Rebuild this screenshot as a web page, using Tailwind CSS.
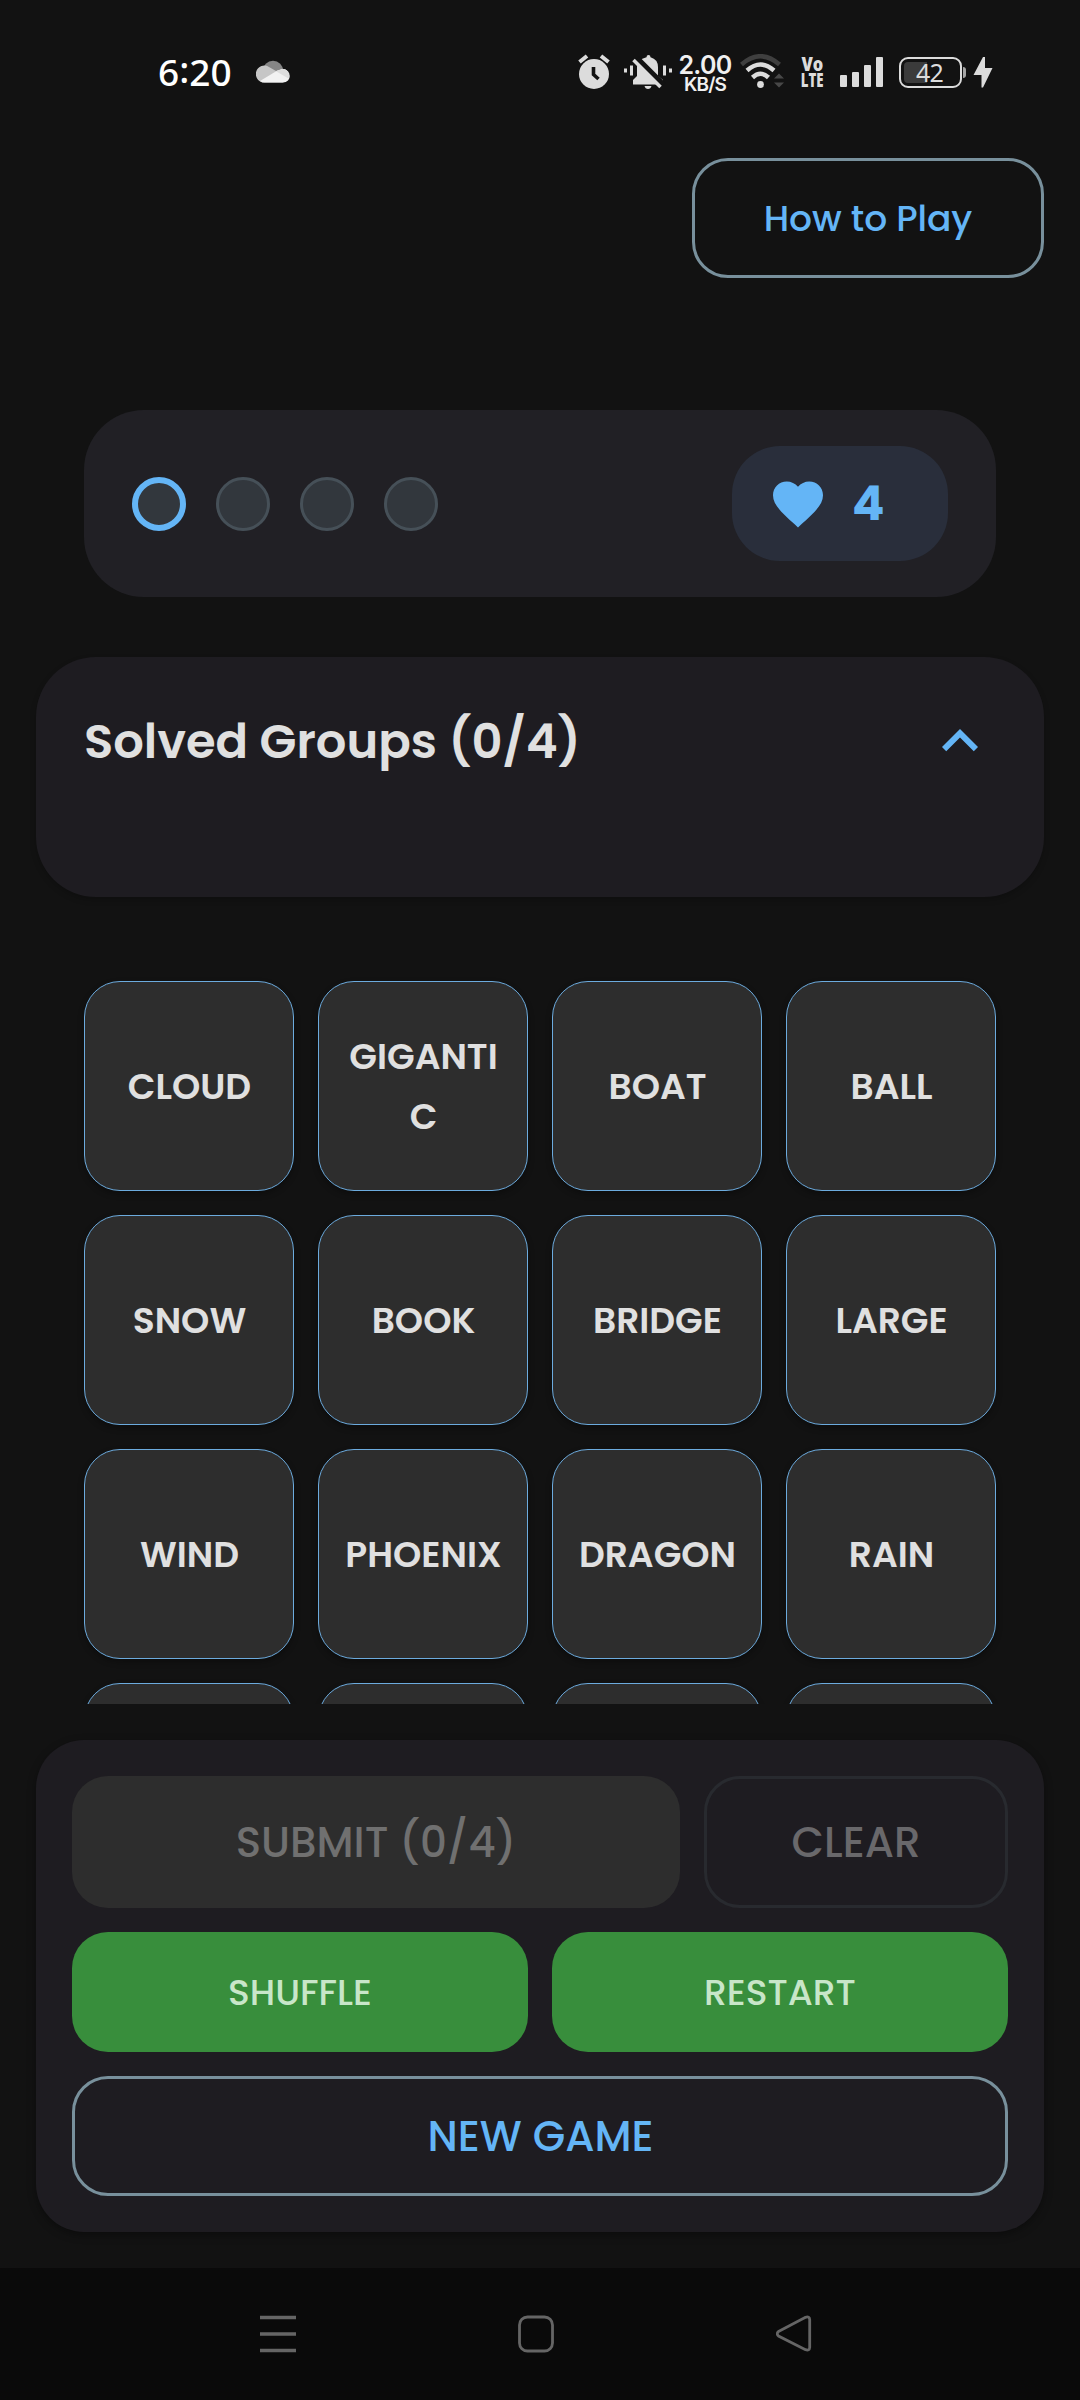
<!DOCTYPE html>
<html lang="en">
<head>
<meta charset="utf-8">
<title>Word Groups</title>
<script src="https://cdn.jsdelivr.net/npm/@tailwindcss/browser@4"></script>
</head>
<body class="bg-[#121212]">
<div class="w-[1080px] h-[2400px] flex flex-col overflow-hidden bg-[#121212] font-['Poppins','Inter',sans-serif] font-medium">

  <!-- Status bar -->
  <header class="h-[158px] shrink-0 flex items-start pt-[48px] pl-[158px] text-[#dcdcdc]">
    <div class="h-12 w-[98px] flex items-center font-['Noto_Sans',sans-serif] text-[37px] leading-[48px] text-white whitespace-nowrap">6<span class="-mt-1.5">:</span>20</div>
    <svg class="mt-[12px]" width="35" height="24" viewBox="0 0 35 24">
      <circle cx="17" cy="11" r="10.2" fill="#858585"/>
      <path d="M8.500 22.500a8.500 8.500 0 1 1 4.500-15.600L20 11l8-1.500a7 7 0 0 1-1.500 13z" fill="#c6c6c6"/>
      <path d="M4 21l17-10.300 6-1.700a7 7 0 0 1 5 11.500q-2 2-5 2H8.500q-2.500 0-4.500-1.500z" fill="#f2f2f2"/>
      <path d="M20 11.300l6-2.600a7 7 0 0 1 6.500 9.800z" fill="#dedede"/>
    </svg>
    <svg class="ml-[287px] mt-[6px]" width="32" height="36" viewBox="0 0 32 36">
      <circle cx="16" cy="20" r="15" fill="currentColor"/>
      <path d="M1.500 8L9 2M30.500 8L23 2" stroke="currentColor" stroke-width="4" fill="none"/>
      <path d="M15.500 13v7.500l5 4.500" stroke="#121212" stroke-width="3.600" fill="none"/>
    </svg>
    <svg class="ml-[14px] mt-[6px]" width="48" height="36" viewBox="0 0 48 36">
      <path d="M0 14.500h3v4H0zM6 11.500h3v10H6zM39 11.500h3v10h-3zM45 14.500h3v4h-3z" fill="currentColor"/>
      <path d="M24.500 1q2 0 2 2.300 7.500 2 7.500 10V22l5 4v4.500H9V26l4-4v-9q0-7.500 9.500-9.700Q22.500 1 24.500 1z" fill="currentColor"/>
      <path d="M20.500 32h7q-.8 3-3.500 3t-3.500-3z" fill="currentColor"/>
      <path d="M13 4.500L39.500 31" stroke="#121212" stroke-width="6"/>
      <path d="M9.500 6L36.500 33" stroke="currentColor" stroke-width="3.500"/>
    </svg>
    <div class="ml-[6px] mt-[6px] w-[54px] flex flex-col items-center font-['Inter',sans-serif] text-[#f0f0f0]">
      <span class="text-[25px] leading-[22px] font-semibold tracking-[-0.7px]">2.00</span>
      <span class="text-[19px] leading-[18px] font-semibold tracking-[-0.8px]">KB/S</span>
    </div>
    <svg class="ml-[8px] mt-[6px]" width="44" height="36" viewBox="0 0 44 36" fill="none">
      <path d="M1.500 10.500Q20.500-6 39.500 10.500" stroke="#3f3f3f" stroke-width="4.500"/>
      <path d="M7 16.500Q20.500 4.500 34 16.500" stroke="currentColor" stroke-width="4.500"/>
      <path d="M12.500 23.500Q20.500 16 28.500 23.500" stroke="currentColor" stroke-width="4.500"/>
      <circle cx="20.500" cy="30.500" r="3.400" fill="currentColor"/>
      <path d="M34 24.500l5-5 5 5zM34 28.500l5 5 5-5z" fill="#484848"/>
    </svg>
    <div class="ml-[15px] mt-[8px] w-[26px] flex flex-col items-center font-['Open_Sans',sans-serif] font-extrabold text-[20px] leading-[15.500px]">
      <span class="scale-x-[0.82]">Vo</span>
      <span class="scale-x-[0.66]">LTE</span>
    </div>
    <svg class="ml-[15px] mt-[8px]" width="44" height="32" viewBox="0 0 44 32" fill="currentColor">
      <rect x="0" y="19" width="7" height="12" rx="1"/><rect x="12" y="16" width="7" height="15" rx="1"/><rect x="24" y="9" width="7" height="22" rx="1"/><rect x="36" y="1" width="7" height="30" rx="1"/>
    </svg>
    <div class="ml-[15px] mt-[9px] w-[63px] h-[31px] rounded-[9px] border-2 border-[#dcdcdc] p-[3px]">
      <div class="relative w-[23px] h-full rounded-l-[4px] bg-[#3b3b3b]">
        <span class="absolute left-[12px] top-0 w-8 h-full font-['Noto_Sans',sans-serif] text-[25px] leading-[21px] font-normal tracking-[-0.8px]">42</span>
      </div>
    </div>
    <div class="ml-[1px] mt-[19px] w-[3px] h-[11px] rounded-r-sm bg-[#a5a5a5]"></div>
    <svg class="ml-[7px] mt-[9px]" width="20" height="31" viewBox="0 0 20 31"><path d="M10 0L.5 18H8.500v12.500h1.500L19.500 11H12V0z" fill="currentColor"/></svg>
  </header>

  <div class="flex justify-end pr-9 shrink-0">
    <button class="w-[352px] h-[120px] pt-[2px] rounded-[36px] border-3 border-[#78909c] text-[#64b5f6] text-[36px] tracking-[-0.1px]">How to Play</button>
  </div>

  <!-- Progress and lives -->
  <section class="mt-[132px] mx-[84px] h-[187px] shrink-0 rounded-[60px] bg-[#212025] px-12 flex items-center justify-between">
    <div class="flex gap-[30px]">
      <i class="size-[54px] rounded-full bg-[#32373d] border-6 border-[#64b5f6]"></i>
      <i class="size-[54px] rounded-full bg-[#32373d] border-3 border-[#465058]"></i>
      <i class="size-[54px] rounded-full bg-[#32373d] border-3 border-[#465058]"></i>
      <i class="size-[54px] rounded-full bg-[#32373d] border-3 border-[#465058]"></i>
    </div>
    <div class="w-[216px] h-[115px] rounded-[48px] bg-[#292e3b] flex items-center pl-9 text-[#64b5f6]">
      <svg width="60" height="60" viewBox="0 0 24 24" fill="currentColor"><path d="M12 21.350l-1.450-1.320C5.400 15.360 2 12.280 2 8.500 2 5.420 4.420 3 7.500 3c1.740 0 3.410.810 4.500 2.090C13.090 3.810 14.760 3 16.500 3 19.580 3 22 5.420 22 8.500c0 3.780-3.400 6.860-8.550 11.540L12 21.350z"/></svg>
      <span class="ml-6 text-[48px] leading-[60px] font-bold">4</span>
    </div>
  </section>

  <section class="mt-[60px] mx-9 h-[240px] shrink-0 rounded-[60px] bg-[#1e1c21] shadow-[0_3px_6px_rgba(0,0,0,0.2)] px-12 pt-9">
    <div class="h-24 flex items-center justify-between">
      <h1 class="pt-[2px] text-[48px] font-semibold text-[#e0e0e0] whitespace-nowrap">Solved Groups (0/4)</h1>
      <svg width="72" height="72" viewBox="0 0 24 24" fill="#64b5f6"><path d="M7.410 15.410L12 10.830l4.590 4.580L18 14l-6-6-6 6z"/></svg>
    </div>
  </section>

  <main class="mt-[60px] h-[747px] shrink-0 overflow-hidden px-[84px] pt-6">
    <div id="grid" class="grid grid-cols-4 gap-6 text-[36px] leading-[60px] font-semibold text-[#e0e0e0] text-center"></div>
  </main>

  <section class="mt-9 mx-9 h-[492px] shrink-0 rounded-[48px] bg-[#1e1c21] shadow-[0_3px_9px_rgba(0,0,0,0.35)] p-9 flex flex-col gap-6">
    <div class="flex gap-6">
      <button class="w-[608px] h-[132px] rounded-[36px] bg-[#2d2d2d] text-[#707070] text-[42px]">SUBMIT (0/4)</button>
      <button class="flex-1 rounded-[36px] border-3 border-[#282a2f] text-[#69686b] text-[42px]">CLEAR</button>
    </div>
    <div class="flex gap-6 h-[120px] text-[#c8e6c9] text-[36px]">
      <button class="flex-1 pt-[2px] rounded-[36px] bg-[#388e3c]">SHUFFLE</button>
      <button class="flex-1 pt-[2px] rounded-[36px] bg-[#388e3c]">RESTART</button>
    </div>
    <button class="h-[120px] pl-[1px] rounded-[36px] border-3 border-[#78909c] text-[#64b5f6] text-[42px]">NEW GAME</button>
  </section>

  <!-- System navigation -->
  <nav class="mt-9 h-[132px] shrink-0 bg-[#0a0a0a] pl-[260px] flex items-center">
    <svg width="36" height="38" viewBox="0 0 36 38" stroke="#656565" stroke-width="3.500"><path d="M0 2.500h36M0 19h36M0 35.500h36"/></svg>
    <svg class="ml-[222px]" width="36" height="38" viewBox="0 0 36 38" fill="none" stroke="#656565" stroke-width="2.800"><rect x="1.500" y="2" width="33" height="34" rx="8"/></svg>
    <svg class="ml-[222px]" width="36" height="38" viewBox="0 0 36 38" fill="none" stroke="#656565" stroke-width="2.800"><path d="M2.500 16.500L29.500 2.300Q33.500 1 33.700 4.500V32.500Q33.500 36 29.500 34.700L2.500 21Q0 18.700 2.500 16.500z"/></svg>
  </nav>
</div>
<script>
  const words = ['CLOUD', 'GIGANTI<br>C', 'BOAT', 'BALL', 'SNOW', 'BOOK', 'BRIDGE', 'LARGE', 'WIND', 'PHOENIX', 'DRAGON', 'RAIN', '', '', '', ''];
  document.getElementById('grid').innerHTML = words.map(w =>
    `<div class="h-[210px] pt-[2px] pl-[1px] rounded-[36px] border border-[#6cabde] bg-[#2d2d2d] shadow-[0_3px_6px_rgba(0,0,0,0.3)] flex items-center justify-center"><span>${w}</span></div>`).join('');
</script>
</body>
</html>
